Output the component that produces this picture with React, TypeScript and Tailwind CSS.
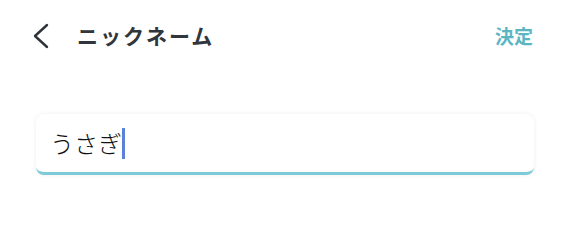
import React from "react";

export default function App() {
  return (
    <div className="w-[570px] h-[217px] bg-white" style={{ fontFamily: '"Noto Sans CJK JP", "Noto Sans", sans-serif' }}>
      <div className="h-[71px] flex items-center pl-[32px] pr-[37px]">
        <svg width="18" height="26" viewBox="0 0 18 26" className="shrink-0">
          <polyline points="15,2 3,13 15,24" fill="none" stroke="#2f3438" strokeWidth="2.4" strokeLinecap="round" strokeLinejoin="round" />
        </svg>
        <div className="ml-[27px] text-[21px] font-bold tracking-[2px] text-[#30363b] leading-none">ニックネーム</div>
        <div className="ml-auto text-[19px] font-bold text-[#5bb6c3] leading-none">決定</div>
      </div>
      <div className="mt-[43px] mx-[36px] h-[61px] rounded-[8px] bg-white border-b-[3px] border-[#7ccbd6] shadow-[0_0_5px_rgba(0,0,0,0.07)] flex items-center pl-[14px]">
        <span className="text-[24px] font-light text-[#111] leading-none">うさぎ</span>
        <span className="w-[3px] h-[31px] bg-[#5b82d8]" />
      </div>
    </div>
  );
}
